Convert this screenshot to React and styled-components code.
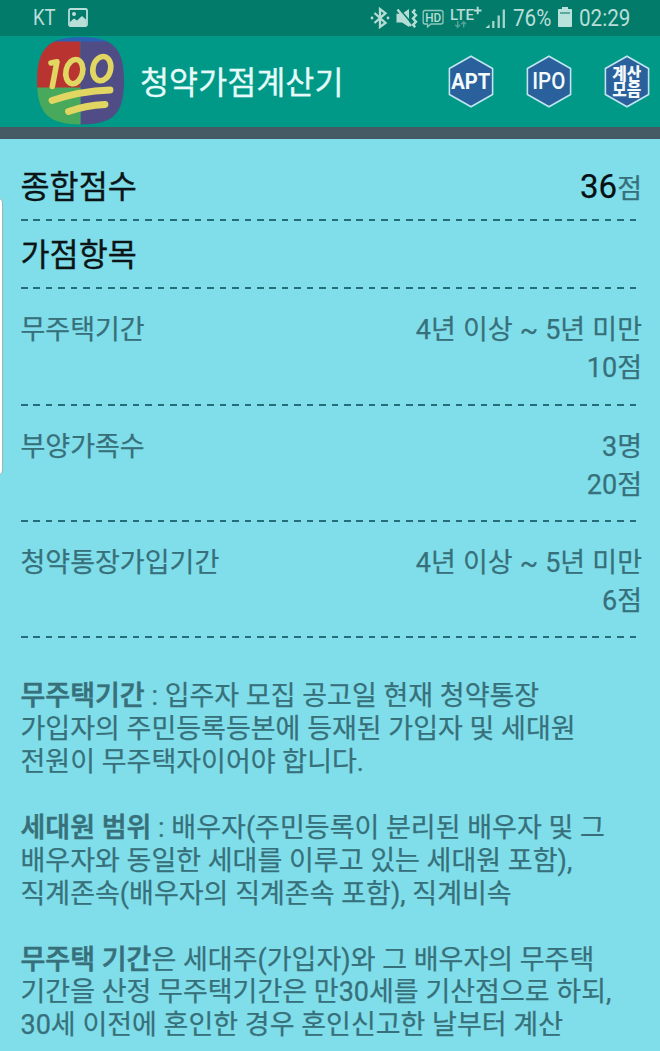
import styled, { createGlobalStyle } from "styled-components"

// ------------------------------
// Content
// ------------------------------
const ITEMS = [
  { label: "무주택기간", value: "4년 이상 ~ 5년 미만", score: 10 },
  { label: "부양가족수", value: "3명", score: 20 },
  { label: "청약통장가입기간", value: "4년 이상 ~ 5년 미만", score: 6 },
]

const NOTES = [
  {
    term: "무주택기간",
    lines: [
      " : 입주자 모집 공고일 현재 청약통장",
      "가입자의 주민등록등본에 등재된 가입자 및 세대원",
      "전원이 무주택자이어야 합니다.",
    ],
  },
  {
    term: "세대원 범위",
    lines: [
      " : 배우자(주민등록이 분리된 배우자 및 그",
      "배우자와 동일한 세대를 이루고 있는 세대원 포함),",
      "직계존속(배우자의 직계존속 포함), 직계비속",
    ],
  },
  {
    term: "무주택 기간",
    lines: [
      "은 세대주(가입자)와 그 배우자의 무주택",
      "기간을 산정 무주택기간은 만30세를 기산점으로 하되,",
      "30세 이전에 혼인한 경우 혼인신고한 날부터 계산",
    ],
  },
]

// ------------------------------
// Page
// ------------------------------
export default function App() {
  return (
    <>
      <GlobalStyle />
      <Screen>
        <StatusBar>
          <Carrier>KT</Carrier>
          <PictureIcon />
          <Spacer />
          <StatusIcons />
          <Battery>76%</Battery>
          <BatteryIcon />
          <Clock>02:29</Clock>
        </StatusBar>

        <AppBar>
          <Logo />
          <Title>청약가점계산기</Title>
          <Actions>
            <HexButton lines={["APT"]} size={22.5} width={39} />
            <HexButton lines={["IPO"]} size={24} width={33} weight={500} />
            <HexButton lines={["계산", "모음"]} size={16.5} width={29} weight={900} />
          </Actions>
        </AppBar>
        <Divider />

        <Content>
          <HeadingRow>
            <Heading>종합점수</Heading>
            <Total>
              <b>36</b>점
            </Total>
          </HeadingRow>
          <Dashes />
          <HeadingRow $tall>
            <Heading>가점항목</Heading>
          </HeadingRow>
          <Dashes />
          {ITEMS.map(item => (
            <div key={item.label}>
              <ItemRow>
                <span>{item.label}</span>
                <ItemValue>
                  <span>{item.value}</span>
                  <span>{item.score}점</span>
                </ItemValue>
              </ItemRow>
              <Dashes />
            </div>
          ))}
          <Notes>
            {NOTES.map(note => (
              <Note key={note.term}>
                {note.lines.map((line, i) => (
                  <NoteLine key={line}>
                    {i === 0 && <strong>{note.term}</strong>}
                    {line}
                  </NoteLine>
                ))}
              </Note>
            ))}
          </Notes>
        </Content>
        <EdgeHandle />
      </Screen>
    </>
  )
}

// ------------------------------
// Icons
// ------------------------------
function PictureIcon() {
  return (
    <PictureSvg width="20" height="19" viewBox="0 0 20 19">
      <rect x="1" y="1" width="18" height="17" rx="1.5" fill="none" stroke="#b9ded8" strokeWidth="1.8" />
      <circle cx="6" cy="6" r="2" fill="#b9ded8" />
      <path d="M2 14 6 10.5 9 12.5 14 8 18 11.5V17H2Z" fill="#b9ded8" />
    </PictureSvg>
  )
}

function StatusIcons() {
  return (
    <StatusSvg width="137" height="24" viewBox="369 5 137 24">
      {/* bluetooth */}
      <g fill="none" stroke="#b5ddd5" strokeWidth="2.3">
        <path d="M374.5 12 385.5 22 380 26V8L385.5 12.2 374.5 22" />
      </g>
      <circle cx="372" cy="17" r="1.4" fill="#b5ddd5" />
      <circle cx="388" cy="17" r="1.4" fill="#b5ddd5" />
      {/* muted speaker with vibration */}
      <path d="M396.5 12.8H402L409 8V26L402 21.5H396.5Z" fill="#b5ddd5" />
      <path d="M399.5 8 413 24" stroke="#037b6b" strokeWidth="1.6" />
      <path d="M397.5 8.5 411 25" stroke="#b5ddd5" strokeWidth="2.4" />
      <path d="M415.2 8.5 413 11 416 14.2 413 17.5 416 20.8 413 23.8 415.2 26.2" fill="none" stroke="#b5ddd5" strokeWidth="2.4" />
      {/* HD bubble */}
      <path d="M425 9.5H441Q443 9.5 443 11.5V21Q443 23 441 23H431L427.5 25.8V23H425Q423.2 23 423.2 21V11.5Q423.2 9.5 425 9.5Z" fill="none" stroke="#8fc9bf" strokeWidth="1.3" />
      <text x="425.2" y="20.8" fontSize="12.5" fontWeight="500" textLength="16" lengthAdjust="spacingAndGlyphs" fill="#b5ddd5">HD</text>
      {/* network type */}
      <text x="450" y="18.6" fontSize="14.8" fontWeight="500" textLength="24" lengthAdjust="spacingAndGlyphs" fill="#b5ddd5">LTE</text>
      <path d="M474 9.5H481.5M477.7 5.8V13.2" stroke="#b5ddd5" strokeWidth="1.9" />
      <path d="M457.7 20V26M455.3 23.7 457.7 26.2 460 23.7M463.7 26.5V20.8M461.3 23.2 463.7 20.7 466 23.2" fill="none" stroke="#56a498" strokeWidth="1.4" />
      {/* signal */}
      <path d="M485.5 27 489.5 23.5V27Z" fill="#b5ddd5" />
      <path d="M493.3 27V20M498.7 27V14.5M503.8 27V8.5" stroke="#a5d5cc" strokeWidth="2.3" />
    </StatusSvg>
  )
}

function BatteryIcon() {
  return (
    <BatterySvg width="14" height="20" viewBox="0 0 14 20">
      <path d="M4 0H10V2H13Q14 2 14 3V19Q14 20 13 20H1Q0 20 0 19V3Q0 2 1 2H4Z" fill="#b9e2dc" />
      <path d="M2 5H12V7H2Z" fill="#5caa9f" />
    </BatterySvg>
  )
}

function Logo() {
  return (
    <LogoSvg width="88" height="88" viewBox="0 0 88 88">
      <clipPath id="logoShape">
        <path d="M44 0C76 0 87 11 87 44S76 87.5 44 87.5 0 77 0 44 12 0 44 0Z" />
      </clipPath>
      <g clipPath="url(#logoShape)">
        <path d="M0 0H88V5H0Z" fill="#2863b5" />
        <path d="M0 4.5H43.5V51H0Z" fill="#b93331" />
        <path d="M43.5 4.5H88V88H43.5Z" fill="#504c85" />
        <path d="M0 50.5H43.5V88H0Z" fill="#48a85b" />
      </g>
      <g fill="none" stroke="#e0d661" strokeLinecap="round" strokeLinejoin="round">
        <g strokeWidth="5.6">
          <path d="M14 26 20 24.8 15.3 49.5" />
          <ellipse cx="37.3" cy="34.6" rx="8.3" ry="12.3" transform="rotate(13 37.3 34.6)" />
          <ellipse cx="64.8" cy="31.6" rx="8.8" ry="12.3" transform="rotate(13 64.8 31.6)" />
        </g>
        <path d="M15 63.5Q43 54 73 53" strokeWidth="6.8" />
        <path d="M31.5 74.5Q48 68.5 68 67.5" strokeWidth="6.8" />
      </g>
    </LogoSvg>
  )
}

function HexButton({ lines, size, width, weight = 700 }) {
  const stacked = lines.length > 1
  return (
    <Hex role="button" aria-label={lines.join("")}>
      <svg width="46" height="53" viewBox="0 0 46 53">
        <path d="M23 1.2 44.6 13.5V39.5L23 51.8 1.4 39.5V13.5Z" fill="#2a609b" stroke="#bfe6ee" strokeWidth="1.6" />
        {lines.map((line, i) => (
          <text
            key={line}
            x="22.8"
            y={stacked ? 24.7 + i * 16.4 : 34.4}
            textAnchor="middle"
            fontSize={size}
            fontWeight={weight}
            textLength={width}
            lengthAdjust="spacingAndGlyphs"
            fill="#f3fafc"
          >
            {line}
          </text>
        ))}
      </svg>
    </Hex>
  )
}

// ------------------------------
// Styles
// ------------------------------
const GlobalStyle = createGlobalStyle`
  *, *::before, *::after {
    box-sizing: border-box;
  }
  body {
    margin: 0;
    background: #80deea;
    font-family: Roboto, "Noto Sans CJK KR", sans-serif;
  }
`

const Screen = styled.div`
  position: relative;
  width: 660px;
  height: 1051px;
  overflow: hidden;
  background: #80deea;
  color: #37707a;
`

const StatusBar = styled.div`
  display: flex;
  align-items: center;
  height: 36px;
  padding: 0 29px 0 33px;
  background: #037b6b;
  color: #b9ded8;
`

const Carrier = styled.span`
  width: 35px;
  font-size: 22px;
  line-height: 34px;
  transform: scaleX(.84);
  transform-origin: left;
`

const PictureSvg = styled.svg`
  flex: none;
  margin-bottom: 2px;
`

const Spacer = styled.div`
  flex: 1;
`

const StatusSvg = styled.svg`
  flex: none;
  margin-right: 7px;
`

const Battery = styled.span`
  width: 45px;
  font-size: 24px;
  line-height: 36px;
  transform: scaleX(.86);
  transform-origin: left;
  white-space: nowrap;
`

const BatterySvg = styled.svg`
  flex: none;
  margin: 0 7px 2px 0;
`

const Clock = styled.span`
  width: 52px;
  font-size: 24px;
  line-height: 36px;
  transform: scaleX(.86);
  transform-origin: left;
  white-space: nowrap;
`

const AppBar = styled.header`
  display: flex;
  align-items: center;
  height: 91px;
  padding: 0 10px 0 37px;
  background: #009887;
`

const LogoSvg = styled.svg`
  flex: none;
  margin-bottom: 2px;
`

const Title = styled.h1`
  flex: 1;
  margin: 4px 0 0 15px;
  font-size: 31.6px;
  font-weight: 400;
  line-height: 46px;
  color: #e4fbfa;
  -webkit-text-stroke: .3px #e4fbfa;
`

const Actions = styled.div`
  display: flex;
  gap: 32px;
`

const Hex = styled.div`
  width: 46px;
  height: 53px;
`

const Divider = styled.div`
  height: 12px;
  background: #455a64;
`

const Content = styled.main`
  padding: 26px 18px 0 20.5px;
  font-size: 27px;
  -webkit-text-stroke: .25px currentColor;
`

const HeadingRow = styled.div`
  display: flex;
  align-items: center;
  justify-content: space-between;
  height: ${p => (p.$tall ? 66.6 : 53.6)}px;
  padding-top: ${p => (p.$tall ? 5 : 0)}px;
  padding-bottom: ${p => (p.$tall ? 0 : 7)}px;
`

const Heading = styled.h2`
  margin: 0;
  font-size: 31.6px;
  font-weight: 400;
  line-height: 42px;
  color: #0b1517;
  -webkit-text-stroke: .35px #0b1517;
`

const Total = styled.div`
  line-height: 42px;
  b {
    font-size: 33px;
    font-weight: 400;
    color: #061012;
  }
`

const Dashes = styled.div`
  width: 616px;
  height: 2px;
  margin-left: .5px;
  background: repeating-linear-gradient(
    to right,
    #256d79 0 6.6px,
    transparent 6.6px 12.42px
  );
`

const ItemRow = styled.div`
  display: flex;
  justify-content: space-between;
  height: 114.4px;
  padding-top: 22px;
  line-height: 38px;
  word-spacing: .4px;
`

const ItemValue = styled.div`
  display: flex;
  flex-direction: column;
  align-items: flex-end;
`

const Notes = styled.div`
  padding-top: 42px;
`

const Note = styled.p`
  margin: 0 0 32.9px;
  line-height: 32.9px;
  strong {
    font-weight: 500;
    -webkit-text-stroke: .6px currentColor;
  }
`

const NoteLine = styled.span`
  display: block;
  white-space: nowrap;
`

// Edge panel handle that floats over the page on the left side
const EdgeHandle = styled.div`
  position: absolute;
  left: -12px;
  top: 197px;
  width: 15px;
  height: 279px;
  border: 1px solid #9bb5b9;
  border-radius: 0 6px 6px 0;
  background: #fff;
`
